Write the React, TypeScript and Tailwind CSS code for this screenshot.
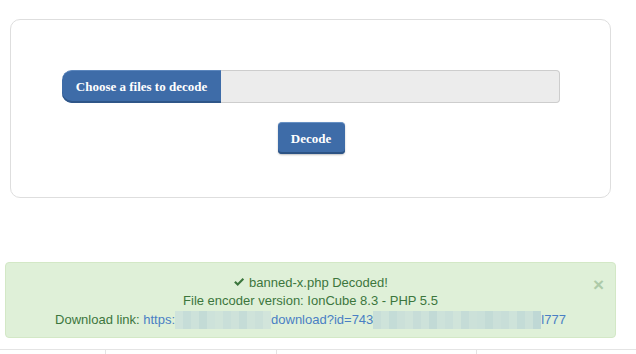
import React from 'react';

// mosaic tiles standing in for the blurred parts of the link
const blurA = ['bg-[#cfe3db]', 'bg-[#c6ddd8]', 'bg-[#cde2da]', 'bg-[#c3dbd6]', 'bg-[#cde2da]', 'bg-[#d0e4da]', 'bg-[#c9dfd9]', 'bg-[#cee2da]', 'bg-[#c5dcd7]', 'bg-[#cfe3da]', 'bg-[#cbe0d9]', 'bg-[#d2e5db]'];
const blurB = ['bg-[#c8ded8]', 'bg-[#cee3da]', 'bg-[#c4dcd7]', 'bg-[#cbe0d9]', 'bg-[#cfe3da]', 'bg-[#c7ddd8]', 'bg-[#cde2da]', 'bg-[#c2dad6]', 'bg-[#cde2da]', 'bg-[#c9dfd9]', 'bg-[#d0e4da]', 'bg-[#c5dcd7]', 'bg-[#cce1d9]', 'bg-[#cae0d9]', 'bg-[#c3dbd6]', 'bg-[#cbe0d9]', 'bg-[#c8ded8]', 'bg-[#cee3da]', 'bg-[#c4dcd7]', 'bg-[#cce1d9]', 'bg-[#bfd8d5]'];

function Mosaic({ tiles }: { tiles: string[] }) {
  return (
    <span className="inline-flex h-[18px] align-middle">
      {tiles.map((c, i) => (
        <span key={i} className={`w-[8px] h-full ${c}`} />
      ))}
    </span>
  );
}

export default function App() {
  return (
    <div className="w-[636px] h-[354px] bg-white overflow-hidden font-['Liberation_Sans',Arial,sans-serif]">
      <div className="pt-[19px] pl-[10px] w-[611px]">
        <div className="border border-[#dedede] rounded-[10px] h-[179px] pt-[50px] pl-[51px] pr-[50px]">
          <div className="flex h-[33px]">
            <button className="w-[159px] h-full bg-[#3e6ca8] text-white font-bold text-[13px] font-['Liberation_Serif',serif] rounded-l-[10px] shadow-[inset_0_-2px_0_#2f5688] border-t border-[#5b86bd]">
              Choose a files to decode
            </button>
            <div className="flex-1 bg-[#ececec] border border-[#cdcdcd] border-l-0 rounded-r-[4px]" />
          </div>
          <div className="flex justify-center mt-[19px]">
            <button className="w-[67px] h-[32px] bg-[#3e6ca8] text-white font-bold text-[13px] font-['Liberation_Serif',serif] rounded-[4px] border-t border-[#6690c4] shadow-[inset_0_-2px_0_#2c5384,0_1px_2px_rgba(0,0,0,0.25)]">
              Decode
            </button>
          </div>
        </div>
      </div>

      <div className="relative ml-[5px] mt-[64px] w-[611px] h-[76px] bg-[#dff0d8] border border-[#d3e8c6] rounded-[4px] pt-[11px] text-center text-[#3c763d] text-[13px] leading-[18px]">
        <div>
          <svg className="inline-block w-[12px] h-[12px] mr-[4px] -mt-[3px] align-middle" viewBox="0 0 16 16">
            <path d="M1.5 8.5 L3.5 6.5 L6.3 9.3 L12.8 2.8 L14.8 4.8 L6.3 13.3 Z" fill="#3c763d" />
          </svg>
          banned-x.php Decoded!
        </div>
        <div>File encoder version: IonCube 8.3 - PHP 5.5</div>
        <div className="mt-[1px] flex items-center justify-center">
          <span>Download link:&nbsp;</span>
          <span className="text-[#4a7fc4]">https:</span>
          <Mosaic tiles={blurA} />
          <span className="text-[#4a7fc4]">download?id=743</span>
          <Mosaic tiles={blurB} />
          <span className="text-[#4a7fc4]">l777</span>
        </div>
        <span className="absolute right-[11px] top-[12px] text-[19px] font-bold leading-none text-[#3c763d] opacity-30">×</span>
      </div>

      <div className="mt-[11px] border-t border-[#e4e4e4] flex h-[10px]">
        <div className="w-[106px] border-r border-[#e4e4e4]" />
        <div className="w-[171px] border-r border-[#e4e4e4]" />
        <div className="w-[200px] border-r border-[#e4e4e4]" />
      </div>
    </div>
  );
}
